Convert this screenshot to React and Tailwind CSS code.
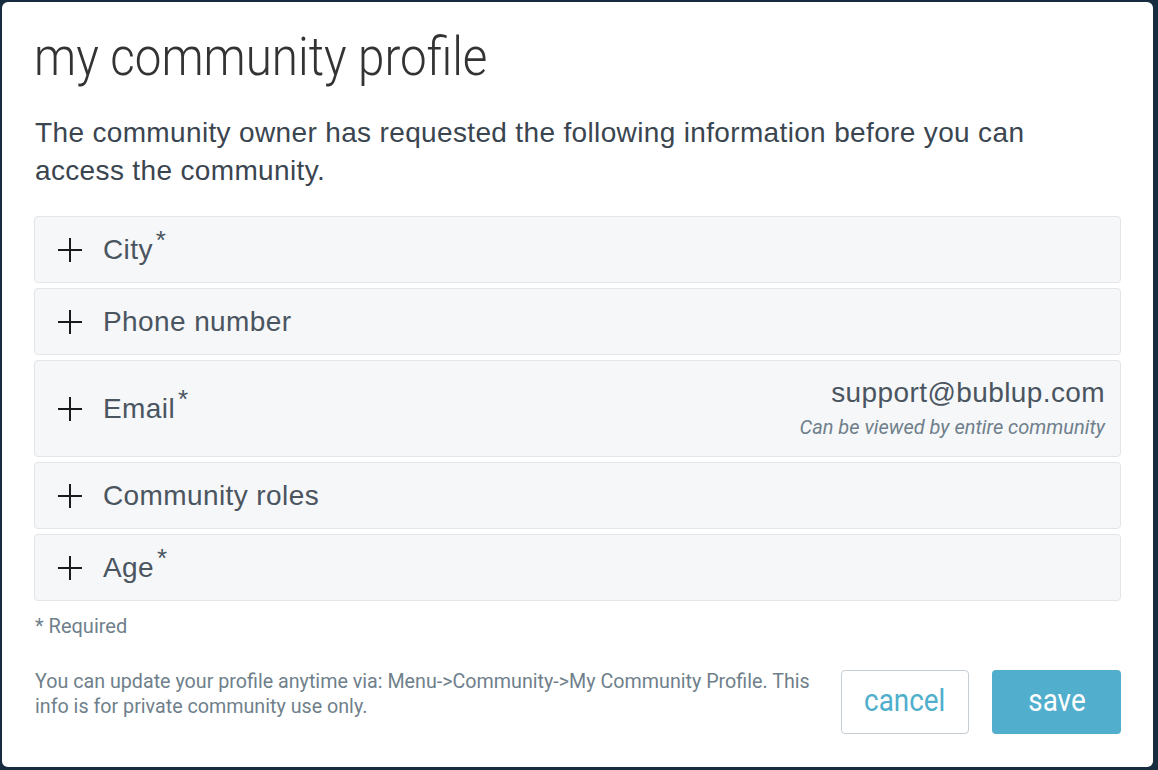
import React from 'react';

const fields = [
    { label: 'City', required: true },
    { label: 'Phone number', required: false },
    { label: 'Email', required: true, value: 'support@bublup.com', note: 'Can be viewed by entire community' },
    { label: 'Community roles', required: false },
    { label: 'Age', required: true },
];

const PlusIcon = () => (
    <svg width="26" height="26" viewBox="0 0 26 26" className="shrink-0">
        <path d="M13 1v24M1 13h24" stroke="#1a1a1a" strokeWidth="2" fill="none" />
    </svg>
);

const FieldRow = ({ field }) => (
    <div
        className={`flex items-center justify-between bg-[#f6f7f9] border border-[#e3e6e9] rounded-[4px] pl-[22px] pr-[15px] ${field.value ? 'h-[97px]' : 'h-[67px]'}`}
    >
        <div className="flex items-center gap-[20px]">
            <PlusIcon />
            <span className="text-[28px] tracking-[0.4px] text-[#4a5560] font-['Liberation_Sans',sans-serif] leading-[34px]">
                {field.label}
                {field.required && <span className="text-[26px] ml-[3px] relative top-[-10px]">*</span>}
            </span>
        </div>
        {field.value && (
            <div className="flex flex-col items-end">
                <span className="text-[28px] tracking-[0.4px] text-[#4a5560] font-['Liberation_Sans',sans-serif] leading-[34px] mt-[2px]">{field.value}</span>
                <span className="text-[20px] italic text-[#6f7f8b] font-['Roboto',sans-serif] leading-[34px]">{field.note}</span>
            </div>
        )}
    </div>
);

export default function App() {
    return (
        <div className="w-[1158px] h-[770px] bg-[#172d3f] p-[2px] pr-[5px] pb-[3px]">
            <div className="w-full h-full bg-white rounded-[6px] px-[32px] pt-[20px] flex flex-col">
                <h1 className="text-[54px] font-light text-[#333] font-['Roboto',sans-serif] leading-[70px] origin-left scale-x-[0.88]">
                    my community profile
                </h1>
                <p className="mt-[22px] ml-[1px] text-[28px] tracking-[0.35px] text-[#3a4550] leading-[38px] font-['Liberation_Sans',sans-serif] pr-[40px]">
                    The community owner has requested the following information before you can access the community.
                </p>
                <div className="mt-[26px] flex flex-col gap-[5px]">
                    {fields.map((f) => <FieldRow key={f.label} field={f} />)}
                </div>
                <div className="mt-[11px] ml-[1px] text-[20px] leading-[28px] text-[#6f7f8b] font-['Roboto',sans-serif]">* Required</div>
                <div className="mt-[28px] flex items-start justify-between">
                    <p className="ml-[1px] w-[795px] text-[19.7px] leading-[25px] text-[#6f7f8b] font-['Roboto',sans-serif] pt-[1px]">
                        You can update your profile anytime via: Menu-&gt;Community-&gt;My Community Profile. This info is for private community use only.
                    </p>
                    <div className="flex gap-[23px] mt-[2px]">
                        <button className="w-[128px] h-[64px] pb-[5px] border border-[#c6cdd3] rounded-[4px] bg-white text-[#4eaecc] text-[32px] font-['Roboto',sans-serif]">
                            <span className="inline-block scale-x-[0.87]">cancel</span>
                        </button>
                        <button className="w-[129px] h-[64px] pb-[5px] rounded-[4px] bg-[#52aecd] text-white text-[32px] font-['Roboto',sans-serif]">
                            <span className="inline-block scale-x-[0.87]">save</span>
                        </button>
                    </div>
                </div>
            </div>
        </div>
    );
}
